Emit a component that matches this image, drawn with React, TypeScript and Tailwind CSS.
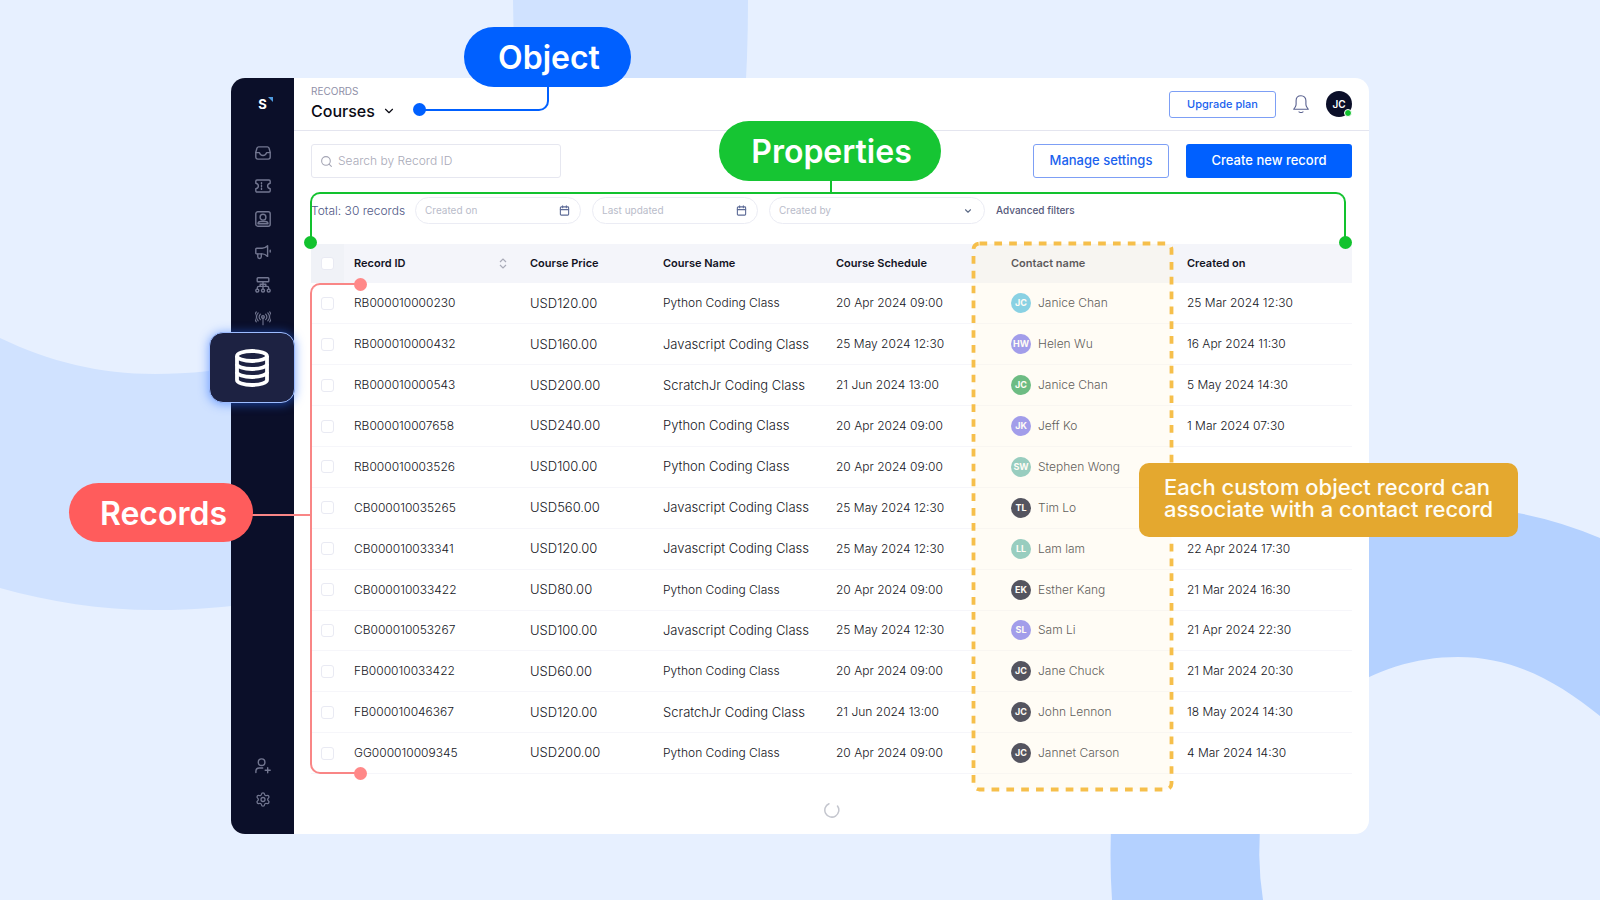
import { ReactNode } from "react";
import { Calendar, ChevronDown, Search, Settings } from "lucide-react";

type RecordRow = {
  id: string;
  price: string;
  course: string;
  compact?: boolean;
  schedule: string;
  initials: string;
  tone: string;
  contact: string;
  created?: string;
};

const sky = "bg-[#57c2e6]";
const violet = "bg-[#7a78f0]";
const green = "bg-[#2fa45c]";
const teal = "bg-[#6cbcb2]";
const navy = "bg-[#0b0f29]";

const rows: RecordRow[] = [
  { id: "RB000010000230", price: "USD120.00", course: "Python Coding Class", compact: true, schedule: "20 Apr 2024 09:00", initials: "JC", tone: sky, contact: "Janice Chan", created: "25 Mar 2024 12:30" },
  { id: "RB000010000432", price: "USD160.00", course: "Javascript Coding Class", schedule: "25 May 2024 12:30", initials: "HW", tone: violet, contact: "Helen Wu", created: "16 Apr 2024 11:30" },
  { id: "RB000010000543", price: "USD200.00", course: "ScratchJr Coding Class", schedule: "21 Jun 2024 13:00", initials: "JC", tone: green, contact: "Janice Chan", created: "5 May 2024 14:30" },
  { id: "RB000010007658", price: "USD240.00", course: "Python Coding Class", schedule: "20 Apr 2024 09:00", initials: "JK", tone: violet, contact: "Jeff Ko", created: "1 Mar 2024 07:30" },
  { id: "RB000010003526", price: "USD100.00", course: "Python Coding Class", schedule: "20 Apr 2024 09:00", initials: "SW", tone: teal, contact: "Stephen Wong" },
  { id: "CB000010035265", price: "USD560.00", course: "Javascript Coding Class", schedule: "25 May 2024 12:30", initials: "TL", tone: navy, contact: "Tim Lo" },
  { id: "CB000010033341", price: "USD120.00", course: "Javascript Coding Class", schedule: "25 May 2024 12:30", initials: "LL", tone: teal, contact: "Lam lam", created: "22 Apr 2024 17:30" },
  { id: "CB000010033422", price: "USD80.00", course: "Python Coding Class", compact: true, schedule: "20 Apr 2024 09:00", initials: "EK", tone: navy, contact: "Esther Kang", created: "21 Mar 2024 16:30" },
  { id: "CB000010053267", price: "USD100.00", course: "Javascript Coding Class", schedule: "25 May 2024 12:30", initials: "SL", tone: violet, contact: "Sam Li", created: "21 Apr 2024 22:30" },
  { id: "FB000010033422", price: "USD60.00", course: "Python Coding Class", compact: true, schedule: "20 Apr 2024 09:00", initials: "JC", tone: navy, contact: "Jane Chuck", created: "21 Mar 2024 20:30" },
  { id: "FB000010046367", price: "USD120.00", course: "ScratchJr Coding Class", schedule: "21 Jun 2024 13:00", initials: "JC", tone: navy, contact: "John Lennon", created: "18 May 2024 14:30" },
  { id: "GG000010009345", price: "USD200.00", course: "Python Coding Class", compact: true, schedule: "20 Apr 2024 09:00", initials: "JC", tone: navy, contact: "Jannet Carson", created: "4 Mar 2024 14:30" },
];

function Backdrop() {
  return (
    <svg className="absolute inset-0 h-full w-full" viewBox="0 0 1600 900" preserveAspectRatio="none" aria-hidden="true">
      <path d="M513 0H748Q748 60 744 110H520Q513 50 513 0Z" fill="#d0e2ff" />
      <path d="M0 338C50 362 100 374 155 374C190 374 230 370 260 362V602C235 606 200 610 155 610C100 610 50 602 0 588Z" fill="#d0e2ff" />
      <path d="M1340 505Q1440 496 1518 513Q1560 521 1600 538V716C1556 680 1512 657 1458 657C1415 657 1375 670 1340 694Z" fill="#b4d1ff" />
      <path d="M1112 810H1262Q1256 855 1263 900H1112Q1109 855 1112 810Z" fill="#b4d1ff" />
    </svg>
  );
}

function Glyph({ children }: { children: ReactNode }) {
  return (
    <svg className="size-4" viewBox="0 0 16 16" fill="none" stroke="currentColor" strokeWidth="1.4" strokeLinecap="round" strokeLinejoin="round" aria-hidden="true">
      {children}
    </svg>
  );
}

function InboxIcon() {
  return (
    <Glyph>
      <path d="M3.600 1.900h8.800c.8 0 1.300.4 1.600 1.100l1.200 4.200v4.900c0 1.200-.8 2-2 2H2.800c-1.200 0-2-.8-2-2V7.200L2 3c.3-.7.8-1.100 1.600-1.100z" />
      <path d="M.9 7.600h3.500c.6 2 1.800 2.900 3.600 2.900s3-.9 3.600-2.900h3.500" />
    </Glyph>
  );
}

function TicketIcon() {
  return (
    <Glyph>
      <path d="M2 2h12c.8 0 1.200.4 1.200 1.200v2c-1.800.4-2.600 1.400-2.600 2.800s.8 2.400 2.600 2.800v2c0 .8-.4 1.200-1.200 1.200H2c-.8 0-1.200-.4-1.200-1.200v-2C2.600 10.400 3.400 9.400 3.400 8S2.600 5.600.8 5.200v-2C.8 2.400 1.200 2 2 2z" />
      <path d="M6.500 4.600v1.200M6.500 7.500v1M6.500 10.200v1.200" />
    </Glyph>
  );
}

function ContactIcon() {
  return (
    <Glyph>
      <rect x="0.8" y="0.8" width="14.4" height="14.4" rx="2" />
      <circle cx="8" cy="6.200" r="2.900" />
      <path d="M3 12.800c0-1.600 1.200-2.300 2.600-2.300h4.800c1.400 0 2.600.7 2.600 2.300z" />
    </Glyph>
  );
}

function MegaphoneIcon() {
  return (
    <Glyph>
      <path d="M1.800 4.300h5.400c2 0 3.800-.9 5.400-2.500v10.600c-1.600-1.600-3.400-2.500-5.400-2.500H1.800c-.7 0-1-.4-1-1V5.300c0-.6.300-1 1-1z" />
      <path d="M2.800 10v2.800c0 1.100.7 1.700 1.700 1.700s1.800-.6 1.800-1.700V10M15.200 6.200v1.800" />
    </Glyph>
  );
}

function FlowIcon() {
  return (
    <Glyph>
      <rect x="2.200" y="0.800" width="11.600" height="4" rx="0.800" />
      <path d="M8 4.800v7.200M2.300 12v-1c0-1 .6-1.600 1.600-1.600h8.200c1 0 1.600.6 1.600 1.600v1M5.200 9.400V7.200h5.600v2.200" />
      <circle cx="2.300" cy="13.600" r="1.500" />
      <circle cx="8" cy="13.600" r="1.500" />
      <circle cx="13.700" cy="13.600" r="1.500" />
    </Glyph>
  );
}

function BroadcastIcon() {
  return (
    <Glyph>
      <circle cx="8" cy="6.900" r="1.300" />
      <path d="M8 8.200v6.600M5.400 9.600a3.900 3.900 0 0 1 0-5.400M10.600 9.600a3.900 3.900 0 0 0 0-5.400M3.200 10.900a6.200 6.200 0 0 1 0-8M12.800 10.900a6.200 6.200 0 0 0 0-8M1.300 11.900a8.600 8.600 0 0 1 0-10M14.700 11.900a8.600 8.600 0 0 0 0-10" strokeWidth="1.100" />
    </Glyph>
  );
}

function InviteIcon() {
  return (
    <Glyph>
      <circle cx="6.600" cy="4.200" r="3.300" />
      <path d="M.9 14.600v-1.400c0-2 1.200-3.200 3.200-3.200h3.600M12.700 9.800v5M10.200 12.300h5" />
    </Glyph>
  );
}

function BellIcon() {
  return (
    <svg className="h-[18px] w-4" viewBox="0 0 16 18" fill="none" stroke="currentColor" strokeWidth="1.100" strokeLinejoin="round" strokeLinecap="round" aria-hidden="true">
      <path d="M8 .7c-3 0-4.900 2.100-4.900 5v3.600c0 1.100-.3 1.900-1 2.900L.7 14.300h14.600l-1.400-2.100c-.7-1-1-1.800-1-2.900V5.700c0-2.900-1.900-5-4.900-5zM6 16.800c.6.500 1.200.7 2 .7s1.400-.2 2-.7" />
    </svg>
  );
}

function DatabaseIcon() {
  return (
    <svg className="h-[38px] w-9" viewBox="0 0 36 38" fill="none" stroke="#fff" strokeWidth="3.800" aria-hidden="true">
      <ellipse cx="18" cy="7" rx="15" ry="5" />
      <path d="M3 7v24c0 2.800 6.700 5 15 5s15-2.200 15-5V7" />
      <path d="M3 15c0 2.800 6.700 5 15 5s15-2.200 15-5M3 23c0 2.800 6.700 5 15 5s15-2.200 15-5" />
    </svg>
  );
}

function NavButton({ label, children }: { label: string; children: ReactNode }) {
  return (
    <button type="button" aria-label={label} className="flex size-4 items-center justify-center text-[#737791]">
      {children}
    </button>
  );
}

function Sidebar() {
  return (
    <nav className="flex w-[63px] shrink-0 flex-col items-center rounded-l-[14px] bg-[#0b0f29] pt-[19px] pb-[27px]">
      <div className="relative flex size-4 items-center justify-center text-[13px] font-bold text-white">
        S
        <svg className="absolute top-0 -right-[2px] size-[5px]" viewBox="0 0 5 5" aria-hidden="true">
          <path d="M0 0h5v5z" fill="#4f9be0" />
        </svg>
      </div>
      <div className="mt-8 flex flex-col gap-[17px]">
        <NavButton label="Inbox"><InboxIcon /></NavButton>
        <NavButton label="Tickets"><TicketIcon /></NavButton>
        <NavButton label="Contacts"><ContactIcon /></NavButton>
        <NavButton label="Campaigns"><MegaphoneIcon /></NavButton>
        <NavButton label="Flows"><FlowIcon /></NavButton>
        <NavButton label="Channels"><BroadcastIcon /></NavButton>
      </div>
      <div className="mt-auto flex flex-col gap-[17px]">
        <NavButton label="Invite user"><InviteIcon /></NavButton>
        <NavButton label="Settings"><Settings size={17} strokeWidth={1.9} /></NavButton>
      </div>
    </nav>
  );
}

function TopBar() {
  return (
    <header className="flex h-[53px] items-center justify-between border-b border-[#e4e5ef] px-[17px]">
      <div className="flex flex-col gap-[2px]">
        <p className="text-[10px] leading-3 text-[#8f90a8]">RECORDS</p>
        <button type="button" className="flex items-center gap-[7px] text-base leading-6 font-medium text-[#0a0a14]">
          Courses <ChevronDown size={14} strokeWidth={2} />
        </button>
      </div>
      <div className="flex items-center gap-4">
        <button type="button" className="h-[27px] w-[107px] rounded-[3px] border border-[#7d9ff5] text-[11px] font-medium text-[#1a62ee]">
          Upgrade plan
        </button>
        <button type="button" aria-label="Notifications" className="flex w-[18px] justify-center text-[#5a6290]">
          <BellIcon />
        </button>
        <button type="button" aria-label="Account" className="relative flex size-[26px] items-center justify-center rounded-full bg-[#0b0f29] text-[10px] font-semibold text-white">
          JC
          <span className="absolute right-0 bottom-0 size-2 rounded-full border border-white bg-[#12c22e]" />
        </button>
      </div>
    </header>
  );
}

function DateFilter({ label }: { label: string }) {
  return (
    <label className="flex h-[27px] w-[166px] items-center justify-between rounded-full border border-[#ebecf4] pr-[10px] pl-[9px]">
      <input aria-label={label} placeholder={label} className="w-0 flex-1 text-[10px] outline-none placeholder:text-[#b9bcca]" />
      <Calendar size={11} strokeWidth={2.4} className="text-[#5c6a96]" />
    </label>
  );
}

function Toolbar() {
  return (
    <>
      <div className="flex h-[34px] items-stretch">
        <label className="flex w-[250px] items-center gap-[5px] rounded-[3px] border border-[#e6e7f0] pl-2">
          <Search size={13} strokeWidth={2} className="text-[#a4a5b4]" />
          <input aria-label="Search by Record ID" placeholder="Search by Record ID" className="w-0 flex-1 text-xs font-light outline-none placeholder:text-[#a9aab8]" />
        </label>
        <button type="button" className="ml-auto w-[136px] rounded-[3px] border border-[#7d9ff5] text-[13px] font-medium text-[#1a62ee]">
          Manage settings
        </button>
        <button type="button" className="ml-[17px] w-[166px] rounded-[3px] bg-[#0060ff] text-[13px] font-medium text-white">
          Create new record
        </button>
      </div>
      <div className="mt-[19px] flex items-center gap-[11px]">
        <p className="w-[93px] text-xs font-light whitespace-nowrap text-[#4f5785]">Total: 30 records</p>
        <DateFilter label="Created on" />
        <DateFilter label="Last updated" />
        <div className="relative flex items-center">
          <select aria-label="Created by" className="h-[27px] w-[216px] appearance-none rounded-full border border-[#ebecf4] pl-[9px] text-[10px] text-[#b9bcca] outline-none">
            <option>Created by</option>
          </select>
          <ChevronDown size={10} strokeWidth={2.6} className="pointer-events-none absolute right-3 text-[#5c6a86]" />
        </div>
        <button type="button" className="text-[10px] font-medium text-[#56597a]">Advanced filters</button>
      </div>
    </>
  );
}

function Tick({ label }: { label: string }) {
  return (
    <input type="checkbox" aria-label={label} className="block size-[13px] appearance-none rounded-[3px] border border-[#e9eaf3] bg-white" />
  );
}

function RecordsTable() {
  return (
    <table className="mt-5 h-[530px] w-full table-fixed border-collapse text-left whitespace-nowrap">
      <colgroup>
        <col className="w-[33px]" />
        <col className="w-[176px]" />
        <col className="w-[133px]" />
        <col className="w-[173px]" />
        <col className="w-[175px]" />
        <col className="w-[176px]" />
        <col />
      </colgroup>
      <thead>
        <tr className="h-[39px] bg-[#f4f5fa] text-[11px] text-[#12131f]">
          <th className="bg-[#f0f2f7] pl-[10px]"><Tick label="Select all records" /></th>
          <th className="px-[10px] font-semibold">
            <div className="flex items-center justify-between pr-[3px]">
              Record ID
              <svg className="h-[11px] w-2" viewBox="0 0 8 11" fill="none" stroke="#a9abb8" strokeWidth="1.200" aria-hidden="true">
                <path d="M1 4l3-3 3 3M1 7l3 3 3-3" />
              </svg>
            </div>
          </th>
          <th className="pl-[10px] font-semibold">Course Price</th>
          <th className="pl-[10px] font-semibold">Course Name</th>
          <th className="pl-[10px] font-semibold">Course Schedule</th>
          <th className="pl-[10px] font-semibold">Contact name</th>
          <th className="pl-[10px] font-semibold">Created on</th>
        </tr>
      </thead>
      <tbody>
        {rows.map((row) => (
          <tr key={row.id} className="h-10 border-b border-[#f6f6fa] text-xs font-light text-[#14151c]">
            <td className="pl-[10px]"><Tick label={`Select ${row.id}`} /></td>
            <td className="pl-[10px]">{row.id}</td>
            <td className="pl-[10px] text-[13px]">{row.price}</td>
            <td className={row.compact ? "pl-[10px]" : "pl-[10px] text-[13px]"}>{row.course}</td>
            <td className="pl-[10px]">{row.schedule}</td>
            <td className="pl-[10px]">
              <div className="flex items-center gap-[7px]">
                <span className={`flex size-5 items-center justify-center rounded-full text-[9px] font-bold text-white ${row.tone}`}>{row.initials}</span>
                {row.contact}
              </div>
            </td>
            <td className="pl-[10px]">{row.created}</td>
          </tr>
        ))}
      </tbody>
    </table>
  );
}

function Annotations() {
  return (
    <>
      <div className="absolute top-[7px] left-[187px] h-[26px] w-[131px] rounded-br-[10px] border-r-2 border-b-2 border-[#0060ff]" />
      <div className="absolute top-[25px] left-[182px] size-[13px] rounded-full bg-[#0060ff]" />
      <div className="absolute -top-[51px] left-[233px] flex h-[60px] w-[167px] items-center justify-center rounded-full bg-[#0060ff] pt-[2px] pl-[3px] text-[32px] font-semibold text-white">
        Object
      </div>

      <div className="absolute top-[114px] right-[23px] left-[79px] h-[51px] rounded-t-[10px] border-x-2 border-t-2 border-[#12c22e]" />
      <div className="absolute top-[158px] left-[73px] size-[13px] rounded-full bg-[#12c22e]" />
      <div className="absolute top-[158px] right-[17px] size-[13px] rounded-full bg-[#12c22e]" />
      <div className="absolute top-[102px] left-[599px] h-[13px] w-[2px] bg-[#12c22e]" />
      <div className="absolute top-[43px] left-[488px] flex h-[60px] w-[222px] items-center justify-center rounded-full bg-[#16c533] pt-[2px] pl-[3px] text-[32px] font-semibold text-white">
        Properties
      </div>

      <div className="absolute top-[205px] left-[79px] h-[491px] w-[51px] rounded-l-[10px] border-y-2 border-l-2 border-[#f98686]" />
      <div className="absolute top-[200px] left-[123px] size-[13px] rounded-full bg-[#ff8888]" />
      <div className="absolute top-[689px] left-[123px] size-[13px] rounded-full bg-[#ff8888]" />
      <div className="absolute top-[436px] left-[20px] h-[2px] w-[60px] bg-[#f98686]" />
      <div className="absolute top-[405px] -left-[162px] flex h-[59px] w-[184px] items-center justify-center rounded-full bg-[#ff5c5c] pt-[2px] pl-[5px] text-[32px] font-semibold text-white">
        Records
      </div>

      <svg className="absolute top-[163px] right-[195px] h-[551px] w-[203px]" viewBox="0 0 203 551" aria-hidden="true">
        <rect x="2.500" y="2.500" width="198" height="546" rx="6" fill="#fff5de" fillOpacity="0.300" />
        <rect x="2.500" y="2.500" width="198" height="546" rx="6" fill="none" stroke="#f6bf4b" strokeWidth="3.800" strokeDasharray="7.700 7.130" />
      </svg>
      <p className="absolute top-[385px] left-[908px] flex h-[74px] w-[379px] items-center rounded-[10px] bg-[#e4a82f] px-[25px] pb-1 text-[22px] leading-[22px] font-medium whitespace-nowrap text-[#fffdf5]">
        Each custom object record can
        <br />
        associate with a contact record
      </p>

      <button type="button" aria-label="Custom objects" className="absolute top-[254px] -left-[22px] flex h-[71px] w-[86px] items-center justify-center rounded-[14px] border border-[#9dbcff] bg-[#1d2242] shadow-[0_1px_10px_1px_rgba(40,110,255,0.5)]">
        <DatabaseIcon />
      </button>
    </>
  );
}

export default function App() {
  return (
    <div className="relative min-h-screen overflow-hidden bg-[#e7f0ff] px-[231px] pt-[78px] pb-[66px] font-['Inter',sans-serif]">
      <Backdrop />
      <div className="relative">
        <main className="flex rounded-[14px] bg-white">
          <Sidebar />
          <section className="min-w-0 flex-1">
            <TopBar />
            <div className="px-[17px] pt-[13px] pb-4">
              <Toolbar />
              <RecordsTable />
              <div className="flex justify-center pt-7" role="status" aria-label="Loading">
                <svg className="size-4" viewBox="0 0 16 16" fill="none" stroke="#c4c6ce" strokeWidth="1.500" strokeLinecap="round" aria-hidden="true">
                  <path d="M5 1.700A7 7 0 1 0 13.500 4" />
                </svg>
              </div>
            </div>
          </section>
        </main>
        <Annotations />
      </div>
    </div>
  );
}
